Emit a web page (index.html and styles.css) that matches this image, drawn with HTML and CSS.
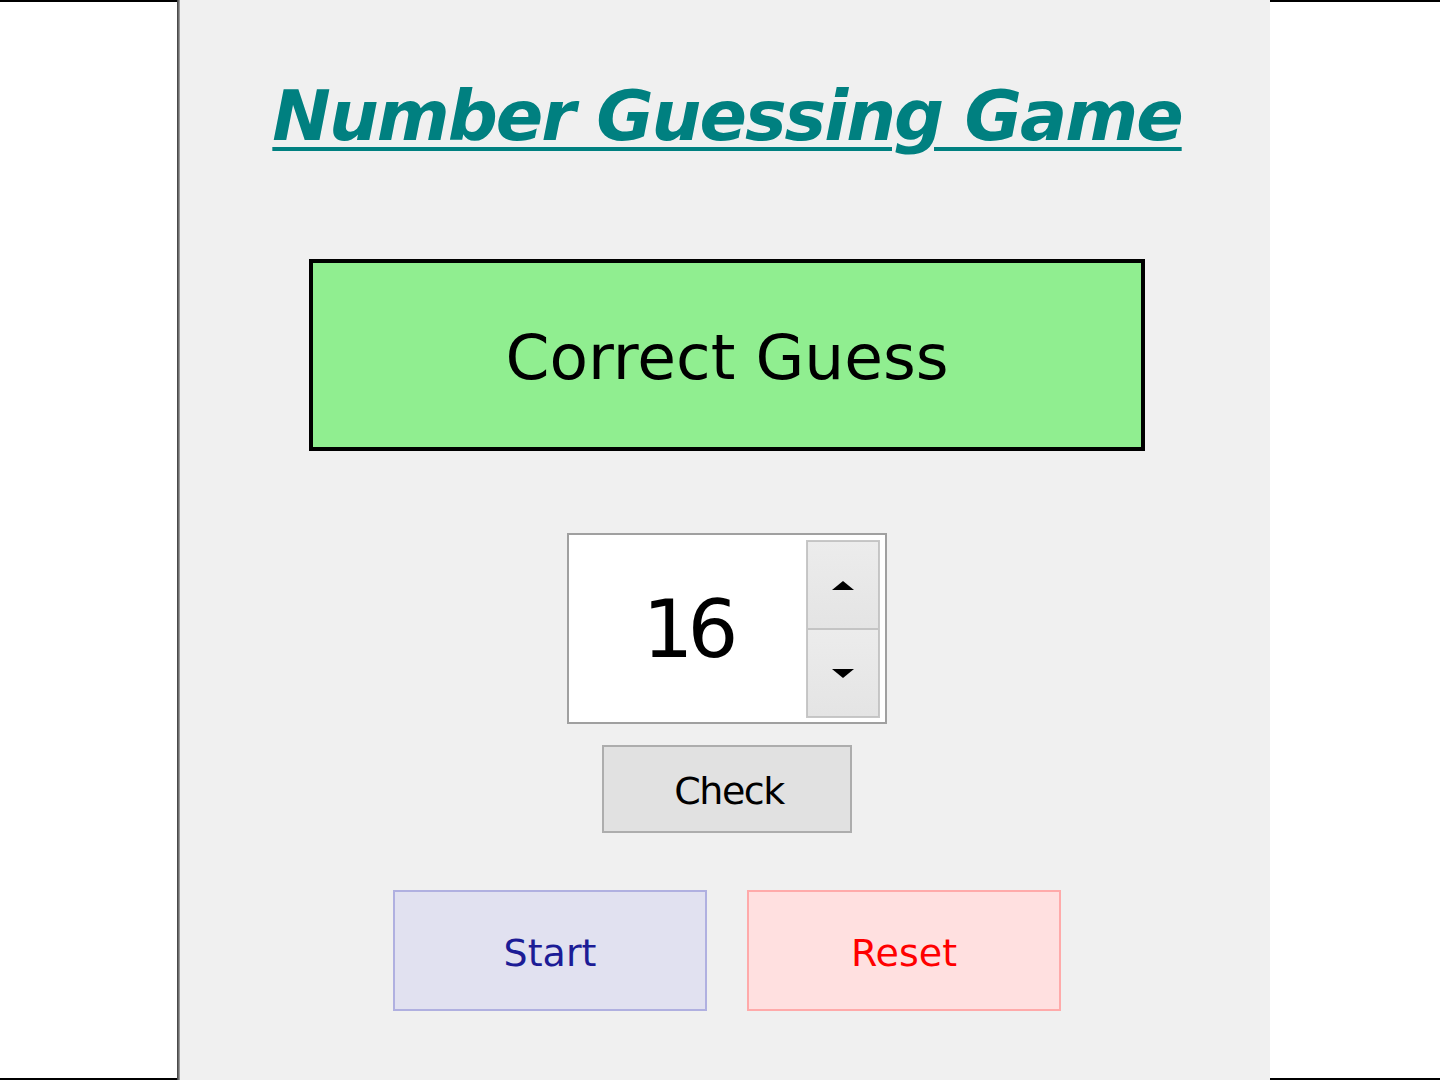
FILE: index.html
```html
<!DOCTYPE html>
<html>
<head>
<meta charset="utf-8">
<link rel="stylesheet" href="styles.css">
</head>
<body>
<div class="screen">
  <div class="side side-left"></div>
  <div class="divider"></div>
  <main class="panel">
    <h1 class="title">Number Guessing Game</h1>
    <div class="result">Correct Guess</div>
    <div class="spin">
      <div class="spin-value">16</div>
      <div class="spin-buttons">
        <div class="spin-btn"><span class="arrow arrow-up"></span></div>
        <div class="spin-btn"><span class="arrow arrow-down"></span></div>
      </div>
    </div>
    <button class="btn btn-check">Check</button>
    <div class="actions">
      <button class="btn btn-start">Start</button>
      <button class="btn btn-reset">Reset</button>
    </div>
  </main>
  <div class="side side-right"></div>
</div>
</body>
</html>
```
FILE: styles.css
```css
html, body {
  margin: 0;
  padding: 0;
  background: #ffffff;
}
.screen {
  display: flex;
  width: 1440px;
  height: 1080px;
  overflow: hidden;
}
.side {
  background: #ffffff;
  border-top: 2px solid #000;
  border-bottom: 2px solid #000;
  box-sizing: border-box;
}
.side-left { width: 177px; }
.side-right { flex: 1; }
.divider {
  width: 3px;
  background: linear-gradient(to right, #3a3a3a, #6a6a6a, #b0b0b0);
}
.panel {
  width: 1090px;
  box-sizing: border-box;
  padding-left: 4px;
  background: #f0f0f0;
  display: flex;
  flex-direction: column;
  align-items: center;
  font-family: "DejaVu Sans", Verdana, sans-serif;
}
.title {
  margin: 71px 0 0 0;
  font-family: "DejaVu Sans", sans-serif;
  font-weight: bold;
  font-style: italic;
  font-size: 70px;
  line-height: 90px;
  color: #008080;
  text-decoration: underline;
  text-decoration-thickness: 4px;
  text-underline-offset: 7px;
  letter-spacing: -2px;
}
.result {
  margin-top: 98px;
  width: 836px;
  height: 192px;
  box-sizing: border-box;
  background: #90ee90;
  border: 4px solid #000;
  display: flex;
  align-items: center;
  justify-content: center;
  font-size: 63px;
  color: #000;
  padding-top: 4px;
}
.spin {
  margin-top: 82px;
  width: 320px;
  height: 191px;
  box-sizing: border-box;
  border: 2px solid #a0a0a0;
  background: #fff;
  display: flex;
  padding: 5px 5px 4px 0;
}
.spin-value {
  flex: 1;
  display: flex;
  align-items: center;
  justify-content: center;
  font-size: 80px;
  letter-spacing: -6px;
  color: #000;
  padding-left: 0;
}
.spin-buttons {
  width: 72px;
  display: flex;
  flex-direction: column;
  border: 1px solid #c8c8c8;
}
.spin-btn {
  flex: 1;
  background: linear-gradient(#ececec, #e4e4e4);
  border: 1px solid #c4c4c4;
  display: flex;
  align-items: center;
  justify-content: center;
}
.arrow {
  width: 0;
  height: 0;
  border-left: 11px solid transparent;
  border-right: 11px solid transparent;
}
.arrow-up { border-bottom: 9px solid #000; }
.arrow-down { border-top: 9px solid #000; }
.btn {
  font-family: "DejaVu Sans", Verdana, sans-serif;
  font-size: 38px;
  cursor: default;
  padding: 0;
  box-sizing: border-box;
}
.btn-check {
  margin-top: 21px;
  width: 250px;
  height: 88px;
  background: #e1e1e1;
  border: 2px solid #adadad;
  color: #000;
  padding-top: 4px;
  padding-left: 4px;
  letter-spacing: -1.5px;
}
.actions {
  margin-top: 57px;
  display: flex;
  gap: 40px;
}
.btn-start, .btn-reset {
  width: 314px;
  height: 121px;
  padding-top: 4px;
}
.btn-start {
  background: #e1e1f0;
  border: 2px solid #b0b0e0;
  color: #1c1c96;
}
.btn-reset {
  background: #ffe0e0;
  border: 2px solid #ffaaaa;
  color: #ff0000;
}
```
